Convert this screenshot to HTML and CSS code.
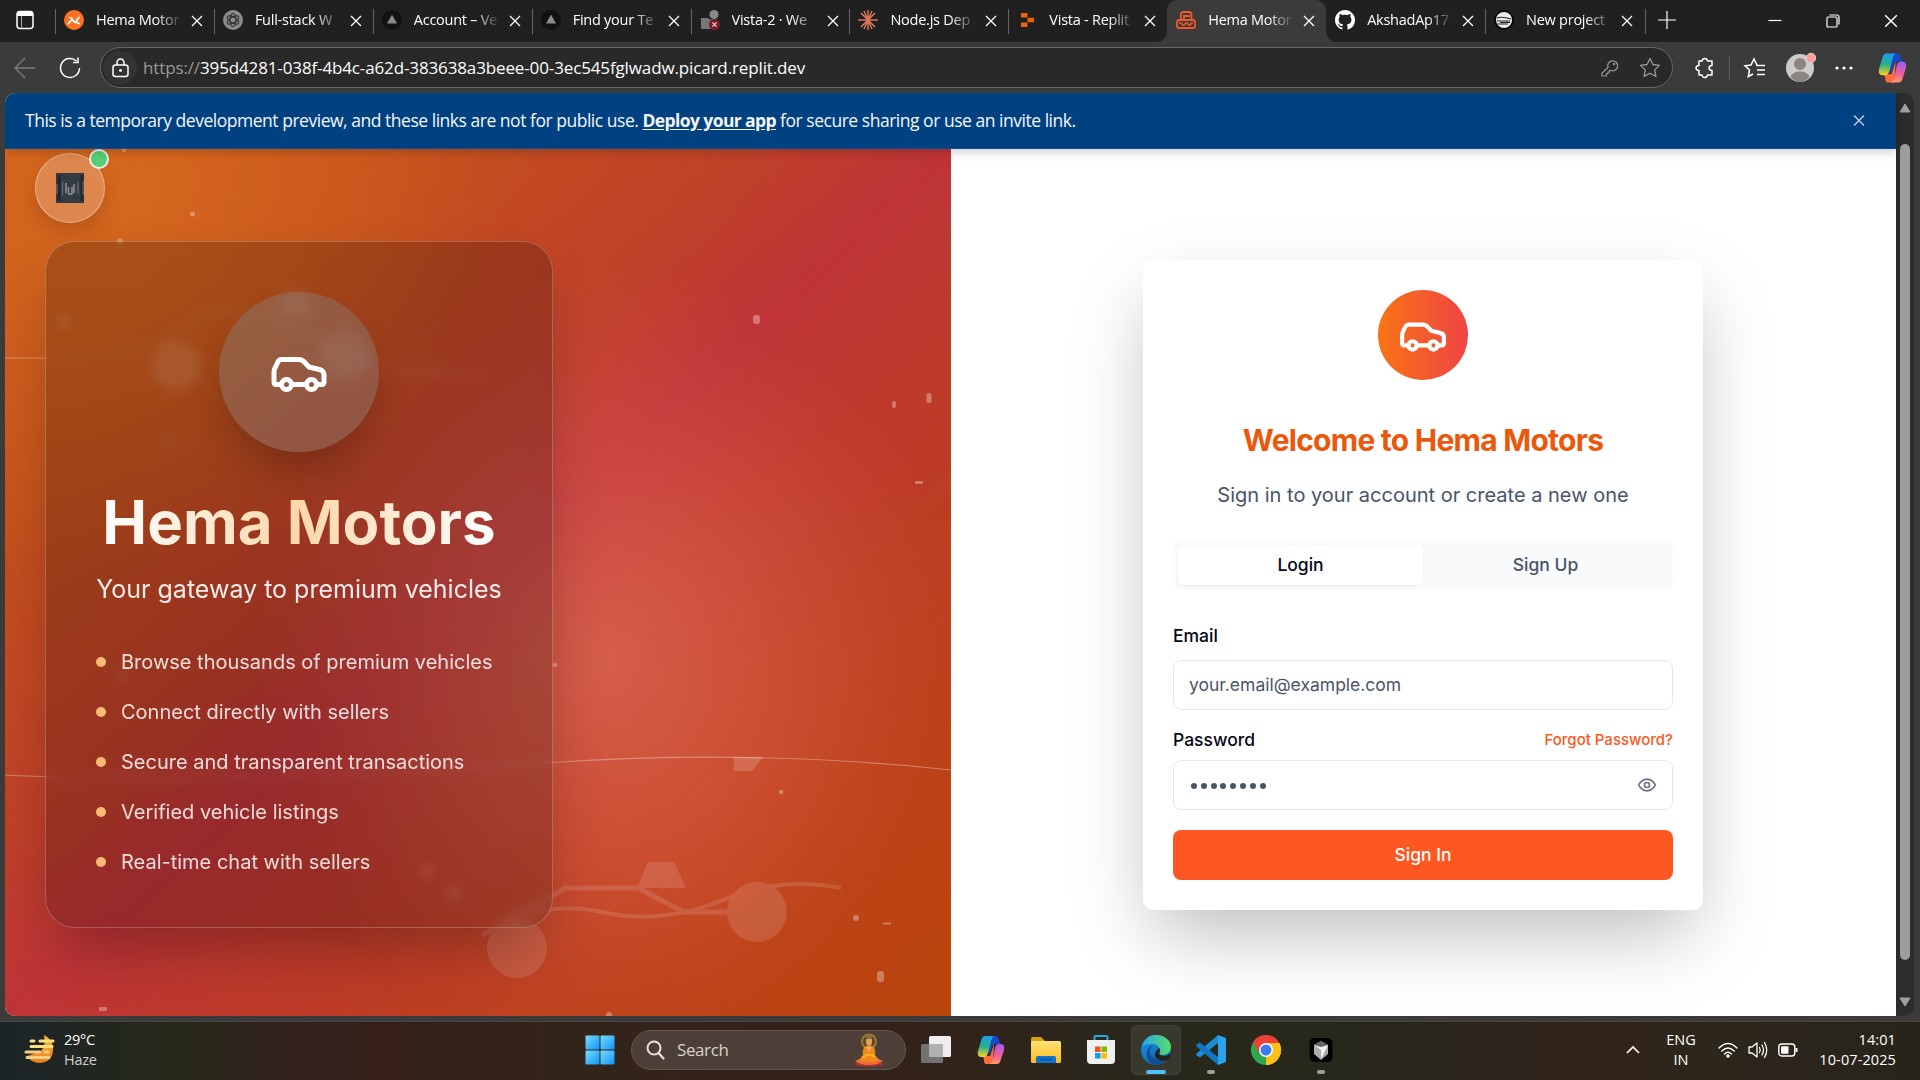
FILE: index.html
```html
<!DOCTYPE html>
<html lang="en">
<head>
<meta charset="utf-8">
<title>Hema Motors</title>
<link rel="stylesheet" href="styles.css">
</head>
<body>
<svg class="defs" width="0" height="0">
  <defs>
    <symbol id="x" viewBox="0 0 12 12"><path d="M1 1l10 10M11 1L1 11" fill="none" stroke="currentColor" stroke-width="1.3"/></symbol>
    <symbol id="car" viewBox="0 0 24 24"><g fill="none" stroke="currentColor" stroke-width="2" stroke-linecap="round" stroke-linejoin="round"><path d="M19 17h2c.6 0 1-.4 1-1v-3c0-.9-.7-1.7-1.5-1.9C18.7 10.6 16 10 16 10s-1.3-1.4-2.2-2.3c-.5-.4-1.1-.7-1.8-.7H5c-.6 0-1.1.4-1.4.9l-1.4 2.9A3.7 3.7 0 0 0 2 12v4c0 .6.4 1 1 1h2"/><circle cx="7" cy="17" r="2"/><path d="M9 17h6"/><circle cx="17" cy="17" r="2"/></g></symbol>
    <symbol id="vercel" viewBox="0 0 20 20"><circle cx="10" cy="10" r="10" fill="#111"/><path d="M10 4.6l5 9H5z" fill="#8a8a8a"/></symbol>
    <linearGradient id="cpA" x1="0" y1="0" x2="0" y2="1"><stop offset="0" stop-color="#1b9df0"/><stop offset=".5" stop-color="#25b08e"/><stop offset="1" stop-color="#ffd21e"/></linearGradient>
    <linearGradient id="cpB" x1="0" y1="0" x2="0" y2="1"><stop offset="0" stop-color="#a259f2"/><stop offset=".6" stop-color="#f0619a"/><stop offset="1" stop-color="#ff9b62"/></linearGradient>
    <symbol id="copilot" viewBox="0 0 28 30">
      <path d="M11 1h8q2 0 3 4l1 4h-5q-2 0-3 3l-3 10z" fill="#1747c9"/>
      <path d="M16 29H9q-2 0-2-4l-1-4h6q2 0 2-3l3-9z" fill="#ff6b3d"/>
      <path d="M8 1h9q-2 1-3 5l-3 12q-1 4-4 4H4q-4 0-3-6l3-10q1-5 4-5z" fill="url(#cpA)"/>
      <path d="M20 29h-8q3-1 4-5l2-11q1-4 4-4h2q4 0 3 6l-3 9q-1 5-4 5z" fill="url(#cpB)"/>
    </symbol>
    <linearGradient id="win" x1="0" y1="0" x2="1" y2="1"><stop offset="0" stop-color="#7ddcff"/><stop offset="1" stop-color="#0a94f8"/></linearGradient>
    <linearGradient id="fold" x1="0" y1="0" x2="0" y2="1"><stop offset="0" stop-color="#ffe07a"/><stop offset="1" stop-color="#fdbd1c"/></linearGradient>
    <linearGradient id="edgeG" x1="0" y1="0" x2="1" y2="0"><stop offset="0" stop-color="#2aa5e6"/><stop offset="1" stop-color="#54df68"/></linearGradient>
    <linearGradient id="edgeB" x1="0" y1="0" x2="1" y2="1"><stop offset="0" stop-color="#1b9ae8"/><stop offset="1" stop-color="#0b4d94"/></linearGradient>
    <linearGradient id="sun" x1="0" y1="0" x2="0" y2="1"><stop offset="0" stop-color="#f5b93a"/><stop offset="1" stop-color="#ef7d1a"/></linearGradient>
  </defs>
</svg>

<div class="screen">
  <header class="tabbar">
    <div class="workspace"><svg width="18" height="20" viewBox="0 0 18 20"><rect x="1" y="1.5" width="16" height="17" rx="3" fill="none" stroke="#fff" stroke-width="1.5"/><path d="M1 6V4q0-3 3-3h10q3 0 3 3v2z" fill="#fff"/><path d="M5.500 6v12" stroke="#aaa"/></svg></div>
    <div class="tab"><svg class="fav" viewBox="0 0 20 20"><circle cx="10" cy="10" r="10" fill="#fd7222"/><path d="M4.500 13.500l3.500-4 3 3 4-5M8 8.500l-2-1M12 12l3 1.500" fill="none" stroke="#fff" stroke-width="1.800" stroke-linecap="round"/></svg><span class="label">Hema Motor</span><svg class="close"><use href="#x"/></svg></div>
    <div class="tab"><svg class="fav" viewBox="0 0 20 20"><circle cx="10" cy="10" r="10" fill="#8b8b8b"/><g fill="none" stroke="#303030" stroke-width="1.100"><ellipse cx="10" cy="10" rx="3" ry="6.500"/><ellipse cx="10" cy="10" rx="3" ry="6.500" transform="rotate(60 10 10)"/><ellipse cx="10" cy="10" rx="3" ry="6.500" transform="rotate(120 10 10)"/></g></svg><span class="label">Full-stack W</span><svg class="close"><use href="#x"/></svg></div>
    <div class="tab"><svg class="fav"><use href="#vercel"/></svg><span class="label">Account – Ve</span><svg class="close"><use href="#x"/></svg></div>
    <div class="tab"><svg class="fav"><use href="#vercel"/></svg><span class="label">Find your Te</span><svg class="close"><use href="#x"/></svg></div>
    <div class="tab"><svg class="fav" viewBox="0 0 20 20"><circle cx="14" cy="4.500" r="4.500" fill="#8a8a8a"/><path d="M1 8h7q3 3 8 0v11H1z" fill="#777"/><circle cx="14.500" cy="14.500" r="5.500" fill="#7d1c24"/><path d="M12.300 12.300l4.400 4.400M16.700 12.300l-4.400 4.400" stroke="#ddd" stroke-width="1.200"/></svg><span class="label">Vista-2 · We</span><svg class="close"><use href="#x"/></svg></div>
    <div class="tab"><svg class="fav" viewBox="0 0 20 20"><path d="M10 0v20M0 10h20M3 3l14 14M17 3L3 17M6 1l8 18M14 1L6 19" stroke="#d97757" stroke-width="1.500"/></svg><span class="label">Node.js Dep</span><svg class="close"><use href="#x"/></svg></div>
    <div class="tab"><svg class="fav" viewBox="0 0 20 20"><path d="M4 3h6.500v4.500H4zM10.500 7.700H17v4.600h-6.500zM4 12.500h6.500V17H4z" fill="#f26207"/></svg><span class="label">Vista - Replit</span><svg class="close"><use href="#x"/></svg></div>
    <div class="tab active"><svg class="fav" viewBox="0 0 20 20"><path d="M5 10V4.500q0-2.500 2.500-2.500H13q2.500 0 2.500 2.500V10M8 9V6h6" fill="none" stroke="#f0592a" stroke-width="1.800"/><path d="M3 10h14q2 0 2 3v3q0 2-2 2H3q-2 0-2-2v-3q0-3 2-3z" fill="none" stroke="#f0592a" stroke-width="1.800"/><path d="M3 13h2.500l1 2h2l1-2h2l1 2h2l1-2H17" fill="none" stroke="#f0592a" stroke-width="1.600"/></svg><span class="label">Hema Motor</span><svg class="close"><use href="#x"/></svg></div>
    <div class="tab"><svg class="fav" viewBox="0 0 16 16"><path fill="#fff" d="M8 0C3.580 0 0 3.580 0 8c0 3.540 2.290 6.530 5.470 7.590.4.070.55-.17.55-.38 0-.19-.01-.82-.01-1.490-2.010.37-2.530-.49-2.690-.94-.09-.23-.48-.94-.82-1.130-.28-.15-.68-.52-.01-.53.63-.01 1.080.58 1.230.82.72 1.210 1.870.87 2.330.66.070-.52.280-.87.510-1.070-1.780-.2-3.640-.89-3.640-3.950 0-.87.310-1.590.82-2.150-.08-.2-.36-1.020.08-2.120 0 0 .67-.21 2.200.82.64-.18 1.320-.27 2-.27s1.360.09 2 .27c1.530-1.040 2.200-.82 2.200-.82.44 1.100.16 1.920.08 2.120.51.56.82 1.270.82 2.150 0 3.070-1.870 3.750-3.650 3.950.29.25.54.73.54 1.480 0 1.070-.01 1.930-.01 2.200 0 .21.15.46.55.38A8.010 8.010 0 0 0 16 8c0-4.420-3.580-8-8-8z"/></svg><span class="label">AkshadAp17</span><svg class="close"><use href="#x"/></svg></div>
    <div class="tab"><svg class="fav" viewBox="0 0 20 20"><circle cx="10" cy="10" r="10" fill="#050505"/><circle cx="10" cy="10" r="8" fill="#eee"/><path d="M3 8q5-2 14 1M3 11h13M3 14h11M6 12.500h10" fill="none" stroke="#222" stroke-width="1.100"/></svg><span class="label">New project</span><svg class="close"><use href="#x"/></svg></div>
    <div class="newtab"><svg width="18" height="18" viewBox="0 0 18 18"><path d="M9 0v18M0 9h18" stroke="#fff" stroke-width="1.200"/></svg></div>
    <div class="winctl">
      <svg width="14" height="14" viewBox="0 0 14 14"><path d="M0.500 6.500h13" stroke="#fff" stroke-width="1.200"/></svg>
      <svg width="14" height="14" viewBox="0 0 14 14"><g fill="none" stroke="#fff" stroke-width="1.200"><rect x="1" y="3" width="10" height="10" rx="1"/><path d="M3.500 1H11q2 0 2 2v7.500"/></g></svg>
      <svg width="14" height="14"><use href="#x"/></svg>
    </div>
  </header>

  <div class="toolbar">
    <svg width="22" height="22" viewBox="0 0 22 22"><path d="M21 11H1.500M11 1L1 11l10 10" fill="none" stroke="#7c7c7c" stroke-width="1.300"/></svg>
    <svg width="22" height="22" viewBox="0 0 22 22"><path d="M20.500 11a9.500 9.500 0 1 1-3-7M19 .5V5.500H14" fill="none" stroke="#fff" stroke-width="1.500"/></svg>
    <div class="address">
      <span class="lock"><svg width="17" height="20" viewBox="0 0 17 20"><g fill="none" stroke="#fff" stroke-width="1.500"><rect x="1" y="7" width="15" height="11.500" rx="2.500"/><path d="M5 7V4.500a3.500 3.500 0 0 1 7 0V7"/></g><circle cx="8.500" cy="12.500" r="1.400" fill="#fff"/></svg></span>
      <span class="url"><span class="scheme">https://</span>395d4281-038f-4b4c-a62d-383638a3beee-00-3ec545fglwadw.picard.replit.dev</span>
      <svg class="key" width="18" height="18" viewBox="0 0 18 18"><path d="M7 8.500a5 5 0 1 1 3 3H8.500V13H7v1.500H5.500V17H1v-3z" fill="none" stroke="#999" stroke-width="1.200"/><circle cx="13" cy="5" r="1.200" fill="#999"/></svg>
      <svg class="star" width="22" height="21" viewBox="0 0 22 21"><path d="M11 1.500l2.900 6 6.600.9-4.800 4.500 1.200 6.500L11 16.200l-5.900 3.200 1.200-6.500L1.500 8.400l6.600-.9z" fill="none" stroke="#999" stroke-width="1.300" stroke-linejoin="round"/></svg>
    </div>
    <div class="tools">
      <svg width="20" height="20" viewBox="0 0 20 20"><path d="M4 3h3q.5-2.500 2.800-2.500T12.500 3H17v4.500q-3 .2-3 2.500t3 2.500V17h-4.500q-.5 2.500-2.800 2.500T7 17H4v-4.500Q1 12.300 1 10t3-2.500z" fill="none" stroke="#fff" stroke-width="1.500" stroke-linejoin="round"/></svg>
      <i class="rule"></i>
      <svg width="22" height="20" viewBox="0 0 22 20"><path d="M13 7L10 1 7 7l-6 .8L5.500 12l-1.200 6.500L9 16M12 7.500h9M13 12h8M13 16.500h8" fill="none" stroke="#fff" stroke-width="1.500"/></svg>
      <svg class="profile" width="30" height="32" viewBox="0 0 30 32"><circle cx="14" cy="18" r="14" fill="#cfccc8"/><circle cx="14" cy="14" r="6" fill="#898582"/><path d="M4.500 27q2-5.500 9.500-5.500t9.500 5.500q-4 5-9.500 5t-9.500-5z" fill="#898582"/><circle cx="25" cy="8" r="4.700" fill="#ff9c98" stroke="#d9d4d2"/></svg>
      <svg width="18" height="4" viewBox="0 0 18 4"><g fill="#fff"><circle cx="2" cy="2" r="1.600"/><circle cx="9" cy="2" r="1.600"/><circle cx="16" cy="2" r="1.600"/></g></svg>
      <svg width="29" height="32"><use href="#copilot"/></svg>
    </div>
  </div>

  <div class="viewport">
    <div class="page">
      <div class="banner"><p>This is a temporary development preview, and these links are not for public use. <a>Deploy your app</a> for secure sharing or use an invite link.</p><svg width="12" height="13"><use href="#x"/></svg></div>
      <main class="split">
        <section class="hero">
          <svg class="scene" viewBox="5 149 946 867" width="946" height="867">
            <g fill="#fff" stroke="none" opacity=".12">
              <circle cx="176" cy="366" r="25"/><circle cx="345" cy="355" r="25"/><path d="M277 315l8-24h18l10 24z"/>
            </g>
            <g fill="none" stroke="#fff" stroke-linecap="butt">
              <path d="M5 358H45Q160 356 190 325T300 330Q350 372 480 375" stroke-width="2" stroke-opacity=".16"/>
              <path d="M5 775Q190 785 552 762.500Q760 749 951 770" stroke-width="1.200" stroke-opacity=".32"/>
            </g>
            <path d="M734 757h29l-11 14h-18z" fill="#fff" opacity=".17"/>
            <g opacity=".12">
              <path d="M482 935L552 896 565 888h73l46 24h60" fill="none" stroke="#fff" stroke-width="5"/>
              <path d="M520 914Q570 904 602 912C640 920 665 916 690 911S740 889 772 886Q806 881 841 888" fill="none" stroke="#fff" stroke-width="4"/>
              <path d="M637 888l11-26h26l12 26z" fill="#fff"/>
              <circle cx="757" cy="912" r="30" fill="#fff"/><circle cx="517" cy="948" r="30" fill="#fff"/>
            </g>
            <g fill="#fff" opacity=".32">
              <rect x="753" y="315" width="7" height="9" rx="3"/><rect x="892" y="401" width="4" height="7" rx="2"/><rect x="926.500" y="393" width="5" height="10" rx="2"/><rect x="915" y="481" width="8" height="3" rx="1"/><rect x="779" y="790" width="4" height="4" rx="1"/><circle cx="856" cy="918" r="3"/><rect x="883" y="922.500" width="8" height="2"/><rect x="877" y="971" width="7" height="11" rx="3"/><circle cx="609" cy="1015" r="3"/><rect x="99" y="1007" width="8" height="4" rx="1"/><circle cx="192.500" cy="214" r="2.500"/><circle cx="124" cy="150" r="2"/><circle cx="120" cy="241.500" r="3"/><circle cx="555" cy="665" r="2.300"/><circle cx="64" cy="322" r="4"/><circle cx="427" cy="871" r="4"/><circle cx="454" cy="894" r="4"/><circle cx="122" cy="675" r="3"/><circle cx="168" cy="440" r="3"/>
            </g>
          </svg>
          <div class="badge">
            <svg width="28" height="30" viewBox="0 0 28 30"><rect width="28" height="30" fill="#343b44"/><path d="M3 2v26M26 2v26" stroke="#20262e" stroke-width="3"/><path d="M1 11v10M6.500 9v13M22 9v12M27 8v14" stroke="#8b8f95" stroke-width="1.200" opacity=".6"/><path d="M10 10v10M12.500 14v7h3.500v-7M18 11v9" fill="none" stroke="#b4b7ba" stroke-width="1.500" opacity=".7"/></svg>
            <i class="online"></i>
          </div>
          <article class="glass">
            <div class="emblem"><svg width="60" height="60"><use href="#car"/></svg></div>
            <h1>Hema Motors</h1>
            <p class="tagline">Your gateway to premium vehicles</p>
            <ul>
              <li>Browse thousands of premium vehicles</li>
              <li>Connect directly with sellers</li>
              <li>Secure and transparent transactions</li>
              <li>Verified vehicle listings</li>
              <li>Real-time chat with sellers</li>
            </ul>
          </article>
        </section>
        <section class="auth">
          <form class="card">
            <div class="logo"><svg width="50" height="50"><use href="#car"/></svg></div>
            <h2>Welcome to Hema Motors</h2>
            <p class="sub">Sign in to your account or create a new one</p>
            <div class="switch"><span class="on">Login</span><span>Sign Up</span></div>
            <div class="row email-row"><label>Email</label></div>
            <div class="field">your.email@example.com</div>
            <div class="row pass-row"><label>Password</label><a>Forgot Password?</a></div>
            <div class="field"><span class="dots"><i></i><i></i><i></i><i></i><i></i><i></i><i></i><i></i></span><svg width="20" height="20" viewBox="0 0 24 24" fill="none" stroke="#6b7280" stroke-width="2" stroke-linecap="round" stroke-linejoin="round"><path d="M2 12s3-7 10-7 10 7 10 7-3 7-10 7-10-7-10-7Z"/><circle cx="12" cy="12" r="3"/></svg></div>
            <div class="submit">Sign In</div>
          </form>
        </section>
      </main>
    </div>
    <div class="scrollbar">
      <svg width="12" height="10" viewBox="0 0 12 10"><path d="M6 1l5 8H1z" fill="#a0a0a0" stroke="#a0a0a0" stroke-linejoin="round"/></svg>
      <i class="thumb"></i>
      <svg width="12" height="10" viewBox="0 0 12 10"><path d="M6 9L1 1h10z" fill="#a0a0a0" stroke="#a0a0a0" stroke-linejoin="round"/></svg>
    </div>
  </div>

  <footer class="taskbar">
    <div class="weather">
      <svg width="31" height="30" viewBox="0 0 31 30"><path d="M20 1q9 4 9 14 0 13-13 14-9 0-13-7l14-5q5-6 3-16z" fill="url(#sun)"/><g stroke-width="3" stroke-linecap="round"><path d="M7 7h3M16 7h13M7 12.500h21" stroke="#ffe07a"/><path d="M2 18h14M21 18h3M3 23.500h22" stroke="#f5cf86"/></g></svg>
      <div><p>29°C</p><p class="dim">Haze</p></div>
    </div>
    <div class="apps">
      <svg class="start" width="30" height="30" viewBox="0 0 30 30"><g fill="url(#win)"><rect x=".5" y=".5" width="14" height="14" rx="1"/><rect x="15.500" y=".5" width="14" height="14" rx="1"/><rect x=".5" y="15.500" width="14" height="14" rx="1"/><rect x="15.500" y="15.500" width="14" height="14" rx="1"/></g></svg>
      <div class="search">
        <svg width="19" height="20" viewBox="0 0 19 20"><circle cx="8" cy="8" r="6.500" fill="none" stroke="#e8e4e2" stroke-width="2"/><path d="M12.500 13l5 5.500" stroke="#e8e4e2" stroke-width="2.200" stroke-linecap="round"/></svg>
        <span>Search</span>
        <svg class="buddha" width="32" height="34" viewBox="0 0 32 34"><circle cx="16" cy="8.500" r="8" fill="#9a7a30"/><circle cx="16" cy="8.500" r="6" fill="#5f4726"/><ellipse cx="16" cy="31" rx="14" ry="2.500" fill="#b52d2d"/><path d="M2 28q7-4 14-1 7-3 14 1-5 4-14 4T2 28z" fill="#ec6d3c"/><path d="M13 13h6q4 2 3 9l4 5q-4 2-10 2T6 27l4-5q-1-7 3-9z" fill="#f08a18"/><path d="M13 14l3 5 3-5" fill="#e8b06c"/><ellipse cx="16" cy="8.500" rx="3" ry="4.500" fill="#dfa45c"/><path d="M13 6q0-5 3-5t3 5z" fill="#8b6b4a"/><path d="M10 24q6-5 12 0" fill="none" stroke="#ffb52a" stroke-width="2"/></svg>
      </div>
      <svg class="app" viewBox="0 0 30 30"><rect y="9" width="22" height="19" rx="1.500" fill="#727272"/><rect x="8" y="1" width="22" height="21" rx="1.500" fill="#efefef"/><rect x="8" y="9" width="14" height="13" fill="#b0b0b0"/></svg>
      <svg class="app"><use href="#copilot"/></svg>
      <svg class="app" viewBox="0 0 30 30"><path d="M0 4q0-2 2-2h8l4 4h12v6H0z" fill="#dda00d"/><rect y="6" width="30" height="22" rx="1.500" fill="url(#fold)"/><path d="M5 28v-5q0-2 2-2h16q2 0 2 2v5z" fill="#1273cf"/><path d="M9 24.500h12" stroke="#0a4f97" stroke-width="1.500"/></svg>
      <svg class="app" viewBox="0 0 30 30"><path d="M8.500 7V2.500q0-1.500 1.500-1.500h10q1.500 0 1.500 1.500V7" fill="none" stroke="#2ba9e0" stroke-width="2"/><path d="M1 5h28v20q0 4-4 4H5q-4 0-4-4z" fill="#f0f0f0"/><path fill="#f25022" d="M9 11.500h5.500V17H9z"/><path fill="#7fba00" d="M15.500 11.500H21V17h-5.500z"/><path fill="#00a4ef" d="M9 18h5.500v5.500H9z"/><path fill="#ffb900" d="M15.500 18H21v5.500h-5.500z"/></svg>
      <div class="slot current"><svg class="app" viewBox="0 0 30 30"><circle cx="15" cy="15" r="15" fill="url(#edgeB)"/><path d="M1 11C4 3 9 0 15 0c9 0 15 6 15 12 0 5-4 8-8 8-3 0-4-1-3-3 1-3-2-8-8-8-4 0-8 1-10 2z" fill="url(#edgeG)"/><path d="M12 10c-4 3-4 9-1 12 4 4 10 4 15 1-3 4-8 7-12 7C8 28 5 23 6 18c0-4 3-7 6-8z" fill="#104f96"/><path d="M18 13q2 2 0 5 0 3 5 3 4 0 6-2l1 1q-1 3-3 5-8 2-12-2-3-4 3-10z" fill="#25231e"/></svg></div>
      <div class="slot run"><svg class="app" viewBox="0 0 30 30"><path d="M22 0l8 3v24l-8 3z" fill="#2ca2ef"/><path d="M22 0v8L4 22.500 0.500 20.500v-2z" fill="#1b8ed8"/><path d="M22 30v-8L4 7.500 0.500 9.500v2z" fill="#1075c2"/></svg></div>
      <svg class="app" viewBox="0 0 30 30"><path d="M15 15L2 7.500A15 15 0 0 1 28 7.500z" fill="#ea4335"/><path d="M15 15L15 30A15 15 0 0 1 2 7.500z" fill="#31a651"/><path d="M15 15L28 7.500A15 15 0 0 1 15 30z" fill="#fbc116"/><path d="M2 7.500L8.500 18.500 15 8H28A15 15 0 0 0 2 7.500z" fill="#ea4335"/><path d="M21 18.500L15 30A15 15 0 0 0 28.300 8H15z" fill="#fbc116"/><circle cx="15" cy="15" r="7" fill="#fff"/><circle cx="15" cy="15" r="5.500" fill="#3b7ded"/></svg>
      <div class="slot run"><svg class="app" viewBox="0 0 30 30"><rect x="3.500" y="3" width="23" height="24" rx="5" fill="#000"/><path d="M15 6l7 4v9l-7 6-7-6v-9z" fill="#aaa"/><path d="M8 10h14l-7 14v-9z" fill="#efefef"/><path d="M8 10l7-4 7 4-7 2z" fill="#666"/></svg></div>
    </div>
    <div class="tray">
      <svg class="up" width="14" height="8" viewBox="0 0 14 8"><path d="M1 7l6-6 6 6" fill="none" stroke="#fff" stroke-width="1.700"/></svg>
      <div class="lang"><p>ENG</p><p>IN</p></div>
      <svg width="20" height="16" viewBox="0 0 20 16"><g fill="none" stroke="#fff" stroke-width="1.400" stroke-linecap="round"><path d="M1 6q9-9 18 0M3.800 9q6.200-6 12.400 0M6.500 12q3.500-3.300 7 0"/></g><circle cx="10" cy="14" r="1.800" fill="#fff"/></svg>
      <svg width="20" height="18" viewBox="0 0 20 18"><g fill="none" stroke="#fff" stroke-width="1.300" stroke-linecap="round" stroke-linejoin="round"><path d="M1 6h3l5-4v14l-5-4H1zM11.500 6.500q1.500 2.500 0 5M14 4q3 5 0 10M16.500 1.500q4.500 7.500 0 15"/></g></svg>
      <svg width="20" height="14" viewBox="0 0 20 14"><rect x=".8" y="1" width="16" height="12" rx="3" fill="none" stroke="#fff" stroke-width="1.400"/><rect x="3" y="3.200" width="7.500" height="7.600" rx="1" fill="#fff"/><path d="M18.500 5v4" stroke="#fff" stroke-width="2"/></svg>
      <div class="clock"><p>14:01</p><p>10-07-2025</p></div>
    </div>
  </footer>
</div>
</body>
</html>
```
FILE: styles.css
```css
* { box-sizing: border-box; margin: 0; padding: 0; }
body { width: 1920px; height: 1080px; overflow: hidden; background: #3b3b3b; font-family: "Open Sans", "Noto Sans", sans-serif; color: #fff; }
svg { display: block; flex: none; overflow: visible; }
.defs { position: absolute; }
.screen { display: grid; grid-template-rows: 42px 51px 928px 59px; height: 1080px; }

/* tab strip */
.tabbar { display: flex; background: #202020; font-size: 14.5px; letter-spacing: -.25px; }
.workspace { width: 55px; padding: 10px 0 0 16px; }
.tab { display: flex; align-items: center; width: 158.9px; height: 42px; padding: 0 0 3px 9px; background: linear-gradient(#666, #666) 0 9px / 1px 25px no-repeat; }
.tab.active { position: relative; background: #3b3b3b; border-radius: 10px 10px 0 0; }
.tab.active::before, .tab.active::after { content: ""; position: absolute; bottom: 0; width: 10px; height: 10px; }
.tab.active::before { left: -10px; background: radial-gradient(circle at 0 0, transparent 9.5px, #3b3b3b 10px); }
.tab.active::after { right: -10px; background: radial-gradient(circle at 100% 0, transparent 9.5px, #3b3b3b 10px); }
.tab.active + .tab { background: none; }
.fav { width: 20px; height: 20px; }
.label { flex: none; width: 86px; margin: 0 9px 0 12px; white-space: nowrap; -webkit-mask-image: linear-gradient(90deg, #000 60px, rgba(0,0,0,.1) 84px); mask-image: linear-gradient(90deg, #000 60px, rgba(0,0,0,.1) 84px); }
.close { width: 12px; height: 12px; margin-top: 3px; }
.newtab { padding: 11px 0 0 13px; width: 100px; border-left: 1px solid transparent; background: linear-gradient(#666, #666) 0 9px / 1px 25px no-repeat; }
.winctl { display: flex; gap: 44px; margin: 14px 22px 0 auto; }

/* toolbar */
.toolbar { display: flex; align-items: center; padding: 0 12px 0 14px; }
.toolbar > svg + svg { margin-left: 23px; }
.address { display: flex; flex: none; align-items: center; width: 1573px; height: 41px; margin-left: 19px; padding-left: 2px; border: 1.5px solid #686868; border-radius: 21px; background: #292929; }
.lock { display: grid; place-items: center; width: 34px; height: 34px; border-radius: 50%; background: #333; }
.url { margin-left: 6px; font-size: 17px; letter-spacing: -.13px; white-space: nowrap; }
.scheme { color: #9a9a9a; }
.key { margin-left: auto; }
.star { margin: 0 11px 0 20px; }
.tools { display: flex; align-items: center; flex: 1; margin-left: 22px; }
.rule { width: 1px; height: 25px; margin: 0 14px 0 14px; background: #5c5c5c; }
.profile { margin: -4px 19px 0 20px; }
.tools svg:last-child { margin-left: 25px; }

/* web view */
.viewport { display: flex; height: 923px; margin: 0 6px 0 5px; border-radius: 10px; overflow: hidden; }
.page { display: flex; flex-direction: column; width: 1891px; height: 923px; background: #fff; }
.banner { position: relative; z-index: 2; display: flex; align-items: center; justify-content: space-between; height: 56px; padding: 0 31px 1px 20px; background: #004182; border-bottom: 1px solid #0b4f95; box-shadow: 0 2px 10px rgba(0,0,0,.22); font-size: 17.5px; letter-spacing: -.475px; color: #f4f6f9; }
.banner a { font-weight: 700; letter-spacing: -.6px; text-decoration: underline; text-underline-offset: 2px; }
.banner svg { margin-top: 1px; color: #c5d3e2; }
.scrollbar { display: flex; flex-direction: column; align-items: center; width: 18px; padding: 10px 0 9px; background: #2c2c2c; }
.thumb { width: 10px; height: 816px; margin: 31px 0 auto; border-radius: 5px; background: #9d9d9d; }
.split { display: grid; grid-template-columns: 946px 945px; height: 867px; }

/* hero */
.hero { position: relative; overflow: hidden; padding: 4px 0 0 30px; font-family: Inter, sans-serif; background:
  radial-gradient(ellipse 350px 400px at 600px 510px, rgba(255,160,130,.36), rgba(255,135,110,.23) 45%, rgba(255,130,110,.06) 82%, transparent),
  radial-gradient(circle 380px at 120px 50px, rgba(235,130,30,.38), transparent),
  linear-gradient(to bottom right, #cc5c1d 0%, #c4501d 22%, #c04029 40%, #be3437 50%, #be382e 58%, #bd3f20 75%, #b9450a 100%); }
.scene { position: absolute; inset: 0; }
.badge { position: relative; display: grid; place-items: center; width: 70px; height: 70px; border: 1px solid rgba(255,255,255,.35); border-radius: 50%; background: rgba(255,255,255,.22); box-shadow: 0 8px 20px rgba(0,0,0,.15); }
.online { position: absolute; top: -5px; right: -5px; width: 20px; height: 20px; border: 2px solid #f4eee6; border-radius: 50%; background: #56cf76; }
.glass { position: relative; display: flex; flex-direction: column; align-items: center; width: 508px; height: 687px; margin: 18px 0 0 10px; padding: 50px 49px 0; border: 1px solid rgba(255,255,255,.22); border-radius: 30px; background: rgba(0,0,0,.2); backdrop-filter: blur(6px); box-shadow: 0 31px 62px -15px rgba(0,0,0,.3); }
.emblem { display: grid; flex: none; place-items: center; width: 160px; height: 160px; border-radius: 50%; background: rgba(128,128,128,.38); box-shadow: 0 25px 50px -12px rgba(0,0,0,.3); }
h1 { margin-top: 40px; font-size: 60px; line-height: 60px; font-weight: 700; white-space: nowrap; color: transparent; background: linear-gradient(90deg, #fff, #fed7aa 50%, #fff); -webkit-background-clip: text; background-clip: text; }
.tagline { margin-top: 20px; font-size: 25px; line-height: 35px; white-space: nowrap; color: rgba(255,255,255,.9); }
.glass ul { align-self: stretch; margin: 40px 1px 0; list-style: none; }
.glass li { display: flex; align-items: center; gap: 15px; height: 30px; margin-bottom: 20px; font-size: 20px; white-space: nowrap; color: rgba(255,255,255,.83); }
.glass li::before { content: ""; width: 10px; height: 10px; border-radius: 50%; background: #fdba74; }

/* sign-in card */
.auth { display: flex; justify-content: center; padding: 111px 1px 0 0; font-family: Inter, sans-serif; color: #020817; }
.card { display: flex; flex-direction: column; width: 560px; height: 650px; padding: 30px; border-radius: 10px; background: #fff; box-shadow: 0 31px 72px -10px rgba(0,0,0,.27); font-size: 17.5px; font-weight: 500; }
.logo { display: grid; place-items: center; width: 90px; height: 90px; align-self: center; border-radius: 50%; color: #fff; background: linear-gradient(90deg, #f97316, #ef4444); }
h2 { margin-top: 40px; font-size: 30px; line-height: 40px; font-weight: 700; letter-spacing: -.75px; text-align: center; color: #ea580c; }
.sub { margin-top: 20px; font-size: 20px; line-height: 30px; font-weight: 400; text-align: center; color: #475569; }
.switch { display: grid; grid-template-columns: 1fr 1fr; height: 50px; margin-top: 30px; padding: 5px; border-radius: 8px; background: #f8fafc; color: #475569; }
.switch span { display: grid; place-items: center; padding-bottom: 2px; border-radius: 5px; }
.switch .on { background: #fff; color: #020817; box-shadow: 0 1px 3px rgba(0,0,0,.06); }
.row { display: flex; align-items: center; justify-content: space-between; line-height: 20px; }
.row a { font-size: 15px; color: #ff5722; }
.email-row { margin: 36px 0 14px; }
.pass-row { margin: 20px 0 10px; }
.field { display: flex; align-items: center; justify-content: space-between; height: 50px; padding: 0 15px 2px; border: 1px solid #e2e8f0; border-radius: 8px; font-weight: 400; color: #475569; }
.field svg { margin-top: 2px; }
.dots { display: flex; gap: 4px; margin: 3px 0 0 2px; }
.dots i { width: 6px; height: 6px; margin-right: -.2px; border-radius: 50%; background: #475569; }
.submit { display: grid; place-items: center; height: 50px; margin-top: 20px; padding-bottom: 2px; border-radius: 8px; background: #ff5722; color: #f8fafc; }

/* taskbar */
.taskbar { display: grid; grid-template-columns: 585px 1fr auto; border-top: 1px solid #4a443e; font-size: 14.5px; line-height: 20px; background: linear-gradient(90deg, #1b2429 0, #22271e 110px, #28291a 180px, #33221e 290px, #361f19 380px, #33241a 560px, #34221a 900px, #2b271c 1090px, #27281a 1180px, #28261b 1400px, #33231b 1600px, #2c261b 1700px, #29241a); }
.weather { display: flex; gap: 9px; padding: 12px 0 0 24px; }
.weather div { margin-top: -4px; letter-spacing: -.3px; }
.dim { color: #cfcfcf; }
.apps { display: flex; align-items: center; padding-bottom: 2px; }
.search { display: flex; align-items: center; width: 275px; height: 40px; margin: 0 15px 0 16px; padding: 0 20px 0 14px; border: 1px solid #655750; border-radius: 20px; background: #4d3f37; font-size: 17px; letter-spacing: -.4px; color: #d8d2ce; }
.search span { margin-left: 12px; }
.buddha { margin-left: auto; }
.app { width: 30px; height: 30px; margin-right: 25px; }
.slot { position: relative; display: grid; place-items: center; width: 30px; margin-right: 25px; }
.slot .app { margin: 0; }
.current { width: 50px; height: 50px; margin: 0 15px 0 -10px; border: 1px solid #42433a; border-radius: 6px; background: #38382e; }
.run::after, .current::after { content: ""; position: absolute; left: 50%; bottom: -9px; width: 8px; height: 4px; margin-left: -4px; border-radius: 2px; background: #a09e98; }
.current::after { bottom: 0; width: 20px; margin-left: -10px; background: #4cc2ff; }
.tray { display: flex; align-items: center; padding: 0 24px 2px 0; }
.lang { width: 50px; margin: 0 12px 0 16px; text-align: center; }
.tray svg + svg { margin-left: 10px; }
.clock { width: 98px; text-align: right; letter-spacing: .1px; }
```
